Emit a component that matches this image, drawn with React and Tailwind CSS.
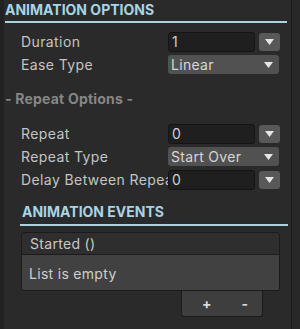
import React from "react";

function Tri() {
  return (
    <svg width="9" height="6" viewBox="0 0 9 6">
      <path d="M0 0 H9 L4.5 6 Z" fill="#e6e6e6" />
    </svg>
  );
}

function NumberRow({ label, value }) {
  return (
    <div className="flex items-center h-[23px]">
      <div className="w-[164px] pl-[17px] text-[14px] tracking-[0.4px] text-[#c4c4c4] whitespace-nowrap overflow-hidden">{label}</div>
      <div className="w-[87px] h-[20px] rounded-[3px] bg-[#1f1f1f] border border-[#151515] text-[14px] text-[#d0d0d0] pl-[3px] leading-[18px]">
        {value}
      </div>
      <div className="ml-[4px] w-[21px] h-[18px] rounded-[3px] bg-[#585858] flex items-center justify-center">
        <Tri />
      </div>
    </div>
  );
}

function SelectRow({ label, value }) {
  return (
    <div className="flex items-center h-[23px]">
      <div className="w-[164px] pl-[17px] text-[14px] tracking-[0.4px] text-[#c4c4c4] whitespace-nowrap">{label}</div>
      <div className="w-[111px] h-[19px] rounded-[3px] bg-[#515151] flex items-center justify-between pl-[3px] pr-[6px] text-[14px] tracking-[0.3px] text-[#d6d6d6]">
        <span>{value}</span>
        <Tri />
      </div>
    </div>
  );
}

export default function App() {
  return (
    <div className="w-[300px] h-[329px] overflow-hidden bg-[#262626] flex" style={{ fontFamily: "Inter, 'Liberation Sans', sans-serif" }}>
      <div className="w-[4px] bg-[#222222]" />
      <div className="w-[288px] bg-[#2a2a2a] border-r border-[#1c1c1c] flex flex-col">
        <div className="pl-[1px] pt-[1px] h-[21px] text-[14px] font-bold text-[#a6d5e6] leading-[17px]">ANIMATION OPTIONS</div>
        <div className="ml-[1px] w-[282px] h-[2px] bg-[#a9d3e0]" />
        <div className="mt-[7px]">
          <NumberRow label="Duration" value="1" />
          <SelectRow label="Ease Type" value="Linear" />
        </div>
        <div className="mt-[14px] pl-[1px] text-[14px] font-bold text-[#868686] leading-[17px] tracking-[0.2px]">- Repeat Options -</div>
        <div className="mt-[15px]">
          <NumberRow label="Repeat" value="0" />
          <SelectRow label="Repeat Type" value="Start Over" />
          <NumberRow label="Delay Between Repeat" value="0" />
        </div>
        <div className="mt-[12px] pl-[18px] text-[14px] font-bold text-[#a6d5e6] leading-[17px]">ANIMATION EVENTS</div>
        <div className="mt-[4px] ml-[16px] w-[268px] h-[2px] bg-[#a9d3e0]" />
        <div className="mt-[6px] ml-[17px] w-[259px] rounded-[3px] border border-[#1b1b1b] overflow-hidden">
          <div className="h-[22px] bg-[#2e2e2e] border-b border-[#1b1b1b] pl-[8px] text-[14px] tracking-[0.3px] text-[#c8c8c8] leading-[22px]">Started ()</div>
          <div className="h-[35px] bg-[#414141] pl-[7px] text-[14px] tracking-[0.3px] text-[#cfcfcf] leading-[38px]">List is empty</div>
        </div>
        <div className="ml-[177px] w-[82px] h-[26px] bg-[#3e3e3e] border border-t-0 border-[#1b1b1b] rounded-b-[3px] flex items-center text-[14px] font-bold text-[#d8d8d8]">
          <span className="ml-[20px]">+</span>
          <span className="ml-[30px]">-</span>
        </div>
      </div>
      <div className="flex-1 bg-[#282828]" />
    </div>
  );
}
